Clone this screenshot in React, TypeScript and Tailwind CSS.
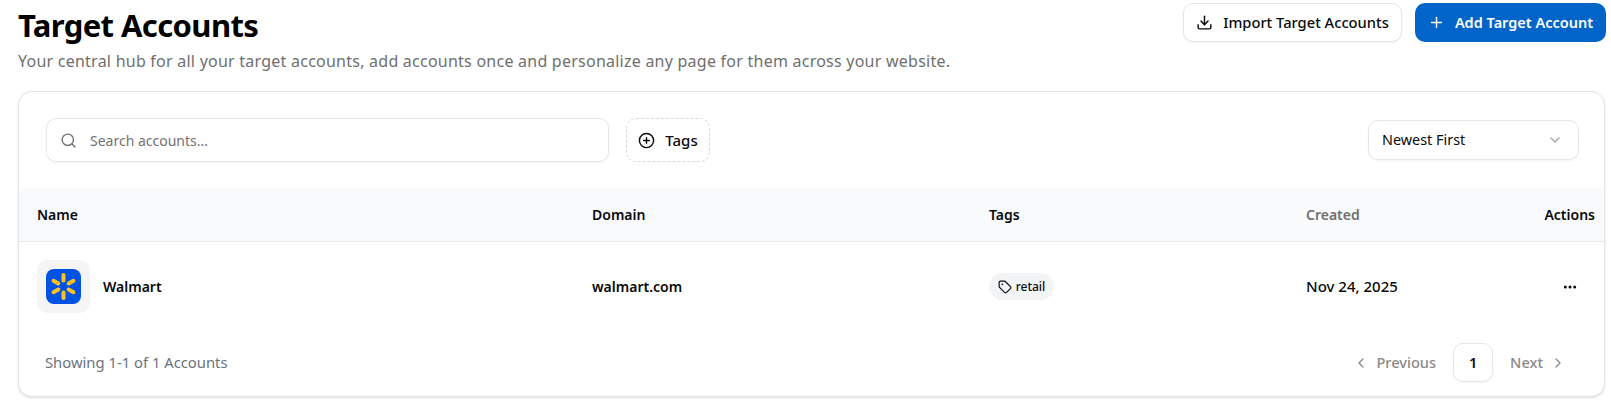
import React from "react";
import { ChevronDown, ChevronLeft, ChevronRight, CirclePlus, Download, Ellipsis, Plus, Search, Tag } from "lucide-react";

const font = "font-['Noto_Sans','Open_Sans',sans-serif]";
const tableGrid = "grid grid-cols-[555px_397px_317px_1fr] items-center pl-[18px] pr-[9px]";

const WalmartLogo = () => (
  <svg width="35" height="35" viewBox="0 0 35 35">
    <rect width="35" height="35" rx="8" fill="#0053e2" />
    <g fill="#ffc220">
      {[0, 60, 120, 180, 240, 300].map((angle) => (
        <rect key={angle} x="15.5" y="4" width="4" height="9.5" rx="2" transform={`rotate(${angle} 17.5 17.5)`} />
      ))}
    </g>
  </svg>
);

export default function App() {
  return (
    <div className={`${font} h-[404px] w-[1611px] overflow-hidden bg-white pl-[18px] pr-[5px] pt-[3px] text-[#0a0a0a]`}>
      <div className="flex items-start justify-between">
        <div className="pt-[2px]">
          <h1 className="text-[31px] leading-[40px] font-bold tracking-[-0.6px] text-black">Target Accounts</h1>
          <p className="mt-[4px] text-[16px] leading-[24px] tracking-[0.24px] text-[#6f6f6f]">
            Your central hub for all your target accounts, add accounts once and personalize any page for them across your website.
          </p>
        </div>
        <div className="flex gap-[13px]">
          <button className="flex h-[39px] w-[219px] items-center justify-center gap-[10px] rounded-[10px] border border-[#e5e5e5] bg-white text-[14.7px] font-medium shadow-xs">
            <Download size={17} />
            Import Target Accounts
          </button>
          <button className="flex h-[39px] w-[191px] items-center justify-center gap-[10px] rounded-[10px] bg-[#0064c8] text-[14.5px] font-semibold text-white">
            <Plus size={17} />
            Add Target Account
          </button>
        </div>
      </div>

      <div className="mt-[18px] h-[306px] w-[1587px] overflow-hidden rounded-[14px] border border-[#e5e5e5] bg-white shadow-sm">
        <div className="flex h-[96px] items-start justify-between pl-[27px] pr-[25px] pt-[26px]">
          <div className="flex gap-[17px]">
            <div className="flex h-[44px] w-[563px] items-center gap-[13px] rounded-[10px] border border-[#e5e5e5] pl-[13px] shadow-xs">
              <Search size={17} className="text-[#737373]" />
              <span className="text-[14px] text-[#737373]">Search accounts...</span>
            </div>
            <div className="flex h-[44px] w-[84px] items-center justify-center gap-[10px] rounded-[10px] border border-dashed border-[#d9d9d9] text-[15px] font-medium">
              <CirclePlus size={17} />
              Tags
            </div>
          </div>
          <div className="mt-[2px] flex h-[40px] w-[211px] items-center justify-between rounded-[10px] border border-[#e5e5e5] pl-[13px] pr-[15px] shadow-xs">
            <span className="text-[14.4px]">Newest First</span>
            <ChevronDown size={16} className="text-[#a3a3a3]" />
          </div>
        </div>

        <div className={`${tableGrid} h-[54px] border-b border-[#e5e7eb] bg-[#f9fafb] text-[14px] font-semibold`}>
          <span>Name</span>
          <span>Domain</span>
          <span>Tags</span>
          <div className="flex justify-between">
            <span className="text-[#6f6f6f]">Created</span>
            <span>Actions</span>
          </div>
        </div>

        <div className={`${tableGrid} h-[89px] text-[14px] font-semibold`}>
          <div className="flex items-center gap-[13px]">
            <div className="flex h-[53px] w-[53px] items-center justify-center rounded-[10px] bg-[#f5f5f5]">
              <WalmartLogo />
            </div>
            <span>Walmart</span>
          </div>
          <span>walmart.com</span>
          <div>
            <span className="inline-flex h-[27px] w-[65px] items-center justify-center gap-[4px] rounded-full bg-[#f3f4f6] text-[12px] font-medium">
              <Tag size={14} />
              retail
            </span>
          </div>
          <div className="flex items-center justify-between">
            <span className="text-[15px] font-medium">Nov 24, 2025</span>
            <Ellipsis size={16} className="mr-[17px]" strokeWidth={2.5} />
          </div>
        </div>

        <div className="mt-[12px] flex items-center justify-between pl-[26px] pr-[38px]">
          <span className="text-[14.8px] text-[#6b7280]">Showing 1-1 of 1 Accounts</span>
          <div className="flex items-center text-[14.6px] font-medium text-[#8a8a8a]">
            <ChevronLeft size={16} />
            <span className="ml-[7px]">Previous</span>
            <span className="mx-[17px] flex h-[39px] w-[40px] items-center justify-center rounded-[10px] border border-[#e5e5e5] font-semibold text-[#0a0a0a] shadow-xs">1</span>
            <span className="mr-[7px]">Next</span>
            <ChevronRight size={16} />
          </div>
        </div>
      </div>
    </div>
  );
}
